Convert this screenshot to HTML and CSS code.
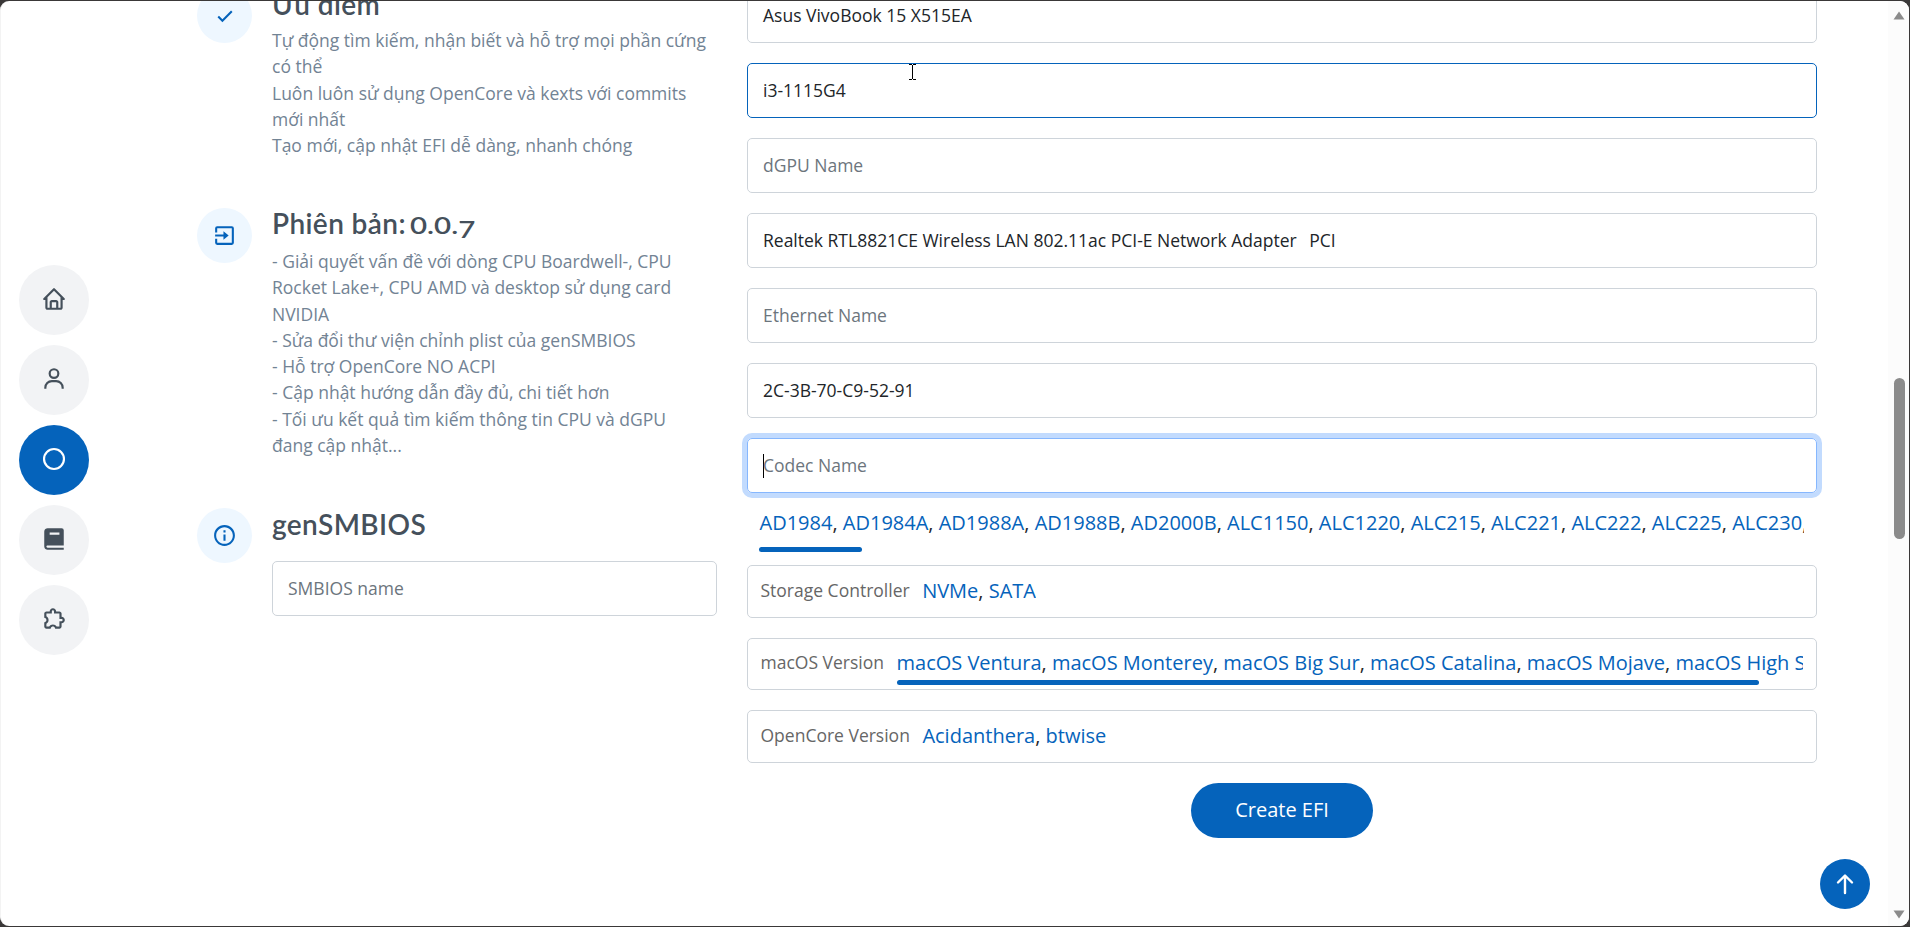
FILE: index.html
```html
<!DOCTYPE html>
<html lang="vi">
<head>
<meta charset="utf-8">
<title>Create EFI</title>
<link rel="stylesheet" href="styles.css">
</head>
<body>
<div class="window">
  <nav class="rail">
    <a class="rail-item"><svg class="icon" viewBox="0 0 24 24"><path d="M3 13h1v7c0 1.103.897 2 2 2h12c1.103 0 2-.897 2-2v-7h1a1 1 0 0 0 .707-1.707l-9-9a.999.999 0 0 0-1.414 0l-9 9A1 1 0 0 0 3 13zm7 7v-5h4v5h-4zm2-15.586 6 6V15l.001 5H16v-5c0-1.103-.897-2-2-2h-4c-1.103 0-2 .897-2 2v5H6v-9.586l6-6z"/></svg></a>
    <a class="rail-item"><svg class="icon" viewBox="0 0 24 24"><path d="M12 2a5 5 0 1 0 5 5 5 5 0 0 0-5-5zm0 8a3 3 0 1 1 3-3 3 3 0 0 1-3 3zm9 11v-1a7 7 0 0 0-7-7h-4a7 7 0 0 0-7 7v1h2v-1a5 5 0 0 1 5-5h4a5 5 0 0 1 5 5v1z"/></svg></a>
    <a class="rail-item active"><svg class="icon" viewBox="0 0 24 24"><circle cx="12" cy="12" r="9.2" fill="none" stroke="currentColor" stroke-width="2"/></svg></a>
    <a class="rail-item"><svg class="icon" viewBox="0 0 24 24"><path d="M6.012 18H21V4a2 2 0 0 0-2-2H6c-1.206 0-3 .799-3 3v14c0 2.201 1.794 3 3 3h15v-2H6.012C5.55 19.988 5 19.805 5 19s.55-.988 1.012-1zM8 6h9v2H8V6z"/></svg></a>
    <a class="rail-item"><svg class="icon" viewBox="0 0 24 24"><path d="M19 10V7c0-1.103-.897-2-2-2h-3c0-1.654-1.346-3-3-3S8 3.346 8 5H5c-1.103 0-2 .897-2 2v3.881l.659.239C4.461 11.41 5 12.166 5 13s-.539 1.59-1.341 1.88L3 15.119V19c0 1.103.897 2 2 2h3.881l.239-.659C9.41 19.539 10.166 19 11 19s1.59.539 1.88 1.341l.239.659H17c1.103 0 2-.897 2-2v-3c1.654 0 3-1.346 3-3s-1.346-3-3-3zm0 4h-2l-.003 5h-2.545c-.711-1.22-2.022-2-3.452-2s-2.741.78-3.452 2H5v-2.548C6.22 15.741 7 14.43 7 13s-.78-2.741-2-3.452V7h5V5a1 1 0 0 1 2 0v2h5v5h2a1 1 0 0 1 0 2z"/></svg></a>
  </nav>

  <main class="content">
    <section class="info">
      <article class="info-item first">
        <span class="info-icon"><svg class="icon" viewBox="0 0 24 24"><path d="m10 15.586-3.293-3.293-1.414 1.414L10 18.414l9.707-9.707-1.414-1.414z"/></svg></span>
        <div class="info-body">
          <h4>Ưu điểm</h4>
          <p>Tự động tìm kiếm, nhận biết và hỗ trợ mọi phần cứng<br>có thể<br>Luôn luôn sử dụng OpenCore và kexts với commits<br>mới nhất<br>Tạo mới, cập nhật EFI dễ dàng, nhanh chóng</p>
        </div>
      </article>
      <article class="info-item second">
        <span class="info-icon"><svg class="icon" viewBox="0 0 24 24"><path d="M19 3H5a2 2 0 0 0-2 2v4h2V5h14v14H5v-4H3v4a2 2 0 0 0 2 2h14a2 2 0 0 0 2-2V5a2 2 0 0 0-2-2z"/><path d="M11 16l5-4-5-4v3H3v2h8z"/></svg></span>
        <div class="info-body">
          <h4>Phiên bản: <span class="digits">0.0.<span class="low">7</span></span></h4>
          <p>- Giải quyết vấn đề với dòng CPU Boardwell-, CPU<br>Rocket Lake+, CPU AMD và desktop sử dụng card<br>NVIDIA<br>- Sửa đổi thư viện chỉnh plist của genSMBIOS<br>- Hỗ trợ OpenCore NO ACPI<br>- Cập nhật hướng dẫn đầy đủ, chi tiết hơn<br>- Tối ưu kết quả tìm kiếm thông tin CPU và dGPU<br>đang cập nhật...</p>
        </div>
      </article>
      <article class="info-item">
        <span class="info-icon"><svg class="icon" viewBox="0 0 24 24"><path d="M12 2C6.486 2 2 6.486 2 12s4.486 10 10 10 10-4.486 10-10S17.514 2 12 2zm0 18c-4.411 0-8-3.589-8-8s3.589-8 8-8 8 3.589 8 8-3.589 8-8 8z"/><path d="M11 11h2v6h-2zm0-4h2v2h-2z"/></svg></span>
        <div class="info-body">
          <h4>genSMBIOS</h4>
          <div class="field placeholder smbios">SMBIOS name</div>
        </div>
      </article>
    </section>

    <section class="form">
      <div class="field">Asus VivoBook 15 X515EA</div>
      <div class="field hovered">i3-1115G4</div>
      <div class="field placeholder">dGPU Name</div>
      <div class="field">Realtek RTL8821CE Wireless LAN 802.11ac PCI-E Network Adapter<span class="bus">PCI</span></div>
      <div class="field placeholder">Ethernet Name</div>
      <div class="field">2C-3B-70-C9-52-91</div>
      <div class="field placeholder focused"><i class="caret"></i>Codec Name</div>
      <div class="codecs">
        <div class="links"><a>AD1984</a>, <a>AD1984A</a>, <a>AD1988A</a>, <a>AD1988B</a>, <a>AD2000B</a>, <a>ALC1150</a>, <a>ALC1220</a>, <a>ALC215</a>, <a>ALC221</a>, <a>ALC222</a>, <a>ALC225</a>, <a>ALC230</a>,</div>
        <div class="track codec-track"></div>
      </div>
      <div class="option storage"><span class="label">Storage Controller</span><div class="links"><a>NVMe</a>, <a>SATA</a></div></div>
      <div class="option macos"><span class="label">macOS Version</span><div class="scroller"><div class="links"><a>macOS Ventura</a>, <a>macOS Monterey</a>, <a>macOS Big Sur</a>, <a>macOS Catalina</a>, <a>macOS Mojave</a>, <a>macOS High S</a></div><div class="track macos-track"></div></div></div>
      <div class="option opencore"><span class="label">OpenCore Version</span><div class="links"><a>Acidanthera</a>, <a>btwise</a></div></div>
      <button class="create">Create EFI</button>
    </section>
  </main>

  <a class="to-top"><svg viewBox="0 0 22 22"><path d="M11 20V3M4 9.500 11 2.500 18 9.500"/></svg></a>
  <svg class="pointer" viewBox="0 0 7 16"><path d="M0 .5h3M4 .5h3M3.5 1v14M0 15.5h3M4 15.5h3"/></svg>

  <div class="scrollbar">
    <svg class="arrow" viewBox="0 0 12 9"><path d="M6 0.5 11.5 8.5H.5z"/></svg>
    <div class="thumb"></div>
    <svg class="arrow down" viewBox="0 0 12 9"><path d="M6 8.5 .5.5h11z"/></svg>
  </div>
</div>
</body>
</html>
```

FILE: styles.css
```css
* { box-sizing: border-box; }
html { background: #3a3838; }
body {
  margin: 0;
  height: 927px;
  padding: 1px 1px 1px 0;
  overflow: hidden;
  font-family: "Open Sans", "Noto Sans", sans-serif;
  font-size: 17.5px;
  line-height: 26.25px;
  color: #272829;
}
.window {
  position: relative;
  display: flex;
  height: 925px;
  background: #fff;
  border-left: 1px solid #f3f3f3;
  border-radius: 9px;
  overflow: hidden;
}
.icon { width: 25px; height: 25px; fill: currentColor; }

.rail {
  display: flex;
  flex-direction: column;
  justify-content: center;
  gap: 10px;
  width: 196px;
  padding: 0 0 7px 18px;
}
.rail-item {
  display: flex;
  align-items: center;
  justify-content: center;
  width: 70px;
  height: 70px;
  padding: 0 1px 2px 0;
  border-radius: 50%;
  background: #f2f3f5;
  color: #45505b;
}
.rail-item .icon { width: 26px; height: 26px; }
.rail-item.active { background: #0563bb; color: #fff; }

.content { display: flex; gap: 30px; height: 925px; margin-top: -13px; }
.info { width: 520px; }
.info-item { display: flex; gap: 20px; }
.info-item.first { height: 220px; }
.info-item.second { height: 300px; }
.second .info-body { margin-top: -1px; }
.info-icon {
  display: flex;
  align-items: center;
  justify-content: center;
  flex: none;
  width: 55px;
  height: 55px;
  border-radius: 50%;
  background: #eef7ff;
  color: #0563bb;
}
.info-body { flex: 1; white-space: nowrap; }
h4 {
  margin: 0 0 6px;
  font-family: Lato, sans-serif;
  font-size: 28px;
  line-height: 33px;
  font-weight: 600;
  letter-spacing: .4px;
  color: #45505b;
}
.second h4 { margin-bottom: 8px; }
.digits {
  display: inline-block;
  margin-left: -3px;
  font-size: 22px;
  line-height: 24px;
  letter-spacing: 0;
  transform: scaleX(1.34);
  transform-origin: left;
}
.low { display: inline-block; transform: translateY(4px); }
p { margin: 0; color: #728394; }
.info-body .smbios { margin-top: 20px; }

.field {
  display: flex;
  align-items: center;
  height: 55px;
  padding: 0 15px;
  border: 1px solid #ced4da;
  border-radius: 5px;
  color: #212529;
  white-space: nowrap;
}
.placeholder { color: #6c757d; }
.bus { margin-left: 12.5px; }
.form { display: flex; flex-direction: column; width: 1070px; }
.form > .field { flex: none; margin-bottom: 20px; }
.form > .hovered { border-color: #0563bb; }
.form > .focused { margin-bottom: 0; border-color: #86b7fe; box-shadow: 0 0 0 5px #c2dbfe; }
.caret { width: 1px; height: 24px; margin-right: -1px; background: #000; }

.links { font-size: 20px; line-height: 30px; white-space: nowrap; overflow: hidden; }
.links a { color: #0563bb; }
.codecs { height: 72px; padding: 15px 13px 0 12px; }
.codecs .links { padding-left: .5px; }
.track { height: 5px; border-radius: 3px; background: #0563bb; }
.codec-track { width: 103px; margin-top: 9px; }
.option {
  display: flex;
  align-items: center;
  gap: 12.5px;
  flex: none;
  margin-bottom: 20px;
  padding: 0 13px 2px 12.5px;
  border: 1px solid #ced4da;
  border-radius: 5px;
}
.storage, .opencore { height: 53px; }
.macos { height: 52px; }
.macos .label { margin-top: -1px; }
.label { flex: none; color: #666; }
.scroller { min-width: 0; padding-top: 6px; }
.macos-track { width: 862px; margin-top: 2px; }
.create {
  align-self: center;
  width: 182px;
  height: 55px;
  padding-bottom: 3px;
  border: 0;
  border-radius: 28px;
  background: #0563bb;
  color: #fff;
  font: 20px "Open Sans", sans-serif;
}

.to-top {
  position: absolute;
  right: 39px;
  bottom: 17px;
  display: flex;
  align-items: center;
  justify-content: center;
  width: 50px;
  height: 50px;
  border-radius: 50%;
  background: #0563bb;
}
.to-top svg {
  width: 22px;
  height: 22px;
  fill: none;
  stroke: #fff;
  stroke-width: 2.4;
  stroke-linecap: round;
  stroke-linejoin: round;
}
.pointer { position: absolute; left: 908px; top: 63px; width: 7px; height: 16px; fill: none; stroke: #000; }

.scrollbar {
  display: flex;
  flex-direction: column;
  align-items: center;
  width: 21px;
  height: 925px;
  padding: 10px 0 7px;
  margin-left: auto;
  background: #fcfcfc;
}
.arrow { flex: none; width: 12px; height: 9px; fill: #8b8b8b; }
.arrow.down { margin-top: auto; }
.thumb { flex: none; width: 11px; height: 161px; margin: 358px 0 0 1px; border-radius: 6px; background: #8b8b8b; }
```
